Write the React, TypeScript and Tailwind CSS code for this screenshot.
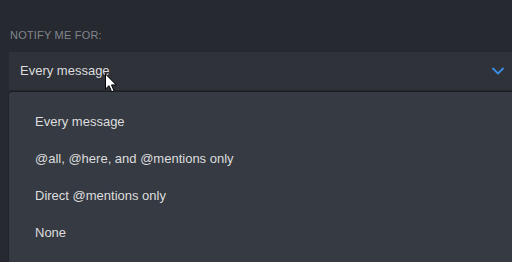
import * as React from "react";

const options = [
	"Every message",
	"@all, @here, and @mentions only",
	"Direct @mentions only",
	"None",
];

const Chevron = () => (
	<svg width="12" height="8" viewBox="0 0 12 8" fill="none">
		<path d="M1 1.5 L6 6.5 L11 1.5" stroke="#3a8ee6" strokeWidth="1.8" strokeLinecap="round" strokeLinejoin="round" />
	</svg>
);

const Cursor = () => (
	<svg width="14" height="21" viewBox="0 0 14 21" className="absolute left-[104px] top-[73px]">
		<path d="M1.5 1 L1.5 16 L5 12.7 L7.6 18.8 L10 17.8 L7.5 11.9 L12.2 11.9 Z" fill="#fff" stroke="#000" strokeWidth="1" strokeLinejoin="round" />
	</svg>
);

export default function App() {
	return (
		<div className="relative w-[512px] h-[262px] overflow-hidden bg-[#26292f] font-['Liberation_Sans',Arial,sans-serif]">
			<div className="pt-[29px] pl-[10px] text-[11px] leading-[12px] text-[#82868c] tracking-[0.2px]">
				NOTIFY ME FOR:
			</div>
			<div className="ml-[9px] mt-[11px] h-[38px] bg-[#2f3239] flex items-center justify-between pl-[11px] pr-[8px]">
				<span className="text-[13px] text-[#dcddde]">Every message</span>
				<Chevron />
			</div>
			<div className="ml-[9px] mt-[2px] h-[200px] bg-[#363a42] rounded-tl-[3px] shadow-[0_-1px_2px_rgba(0,0,0,0.35)] pt-[11px]">
				{options.map((o) => (
					<div key={o} className="h-[37px] flex items-center pl-[26px] text-[13px] text-[#dcddde]">
						{o}
					</div>
				))}
			</div>
			<Cursor />
		</div>
	);
}
